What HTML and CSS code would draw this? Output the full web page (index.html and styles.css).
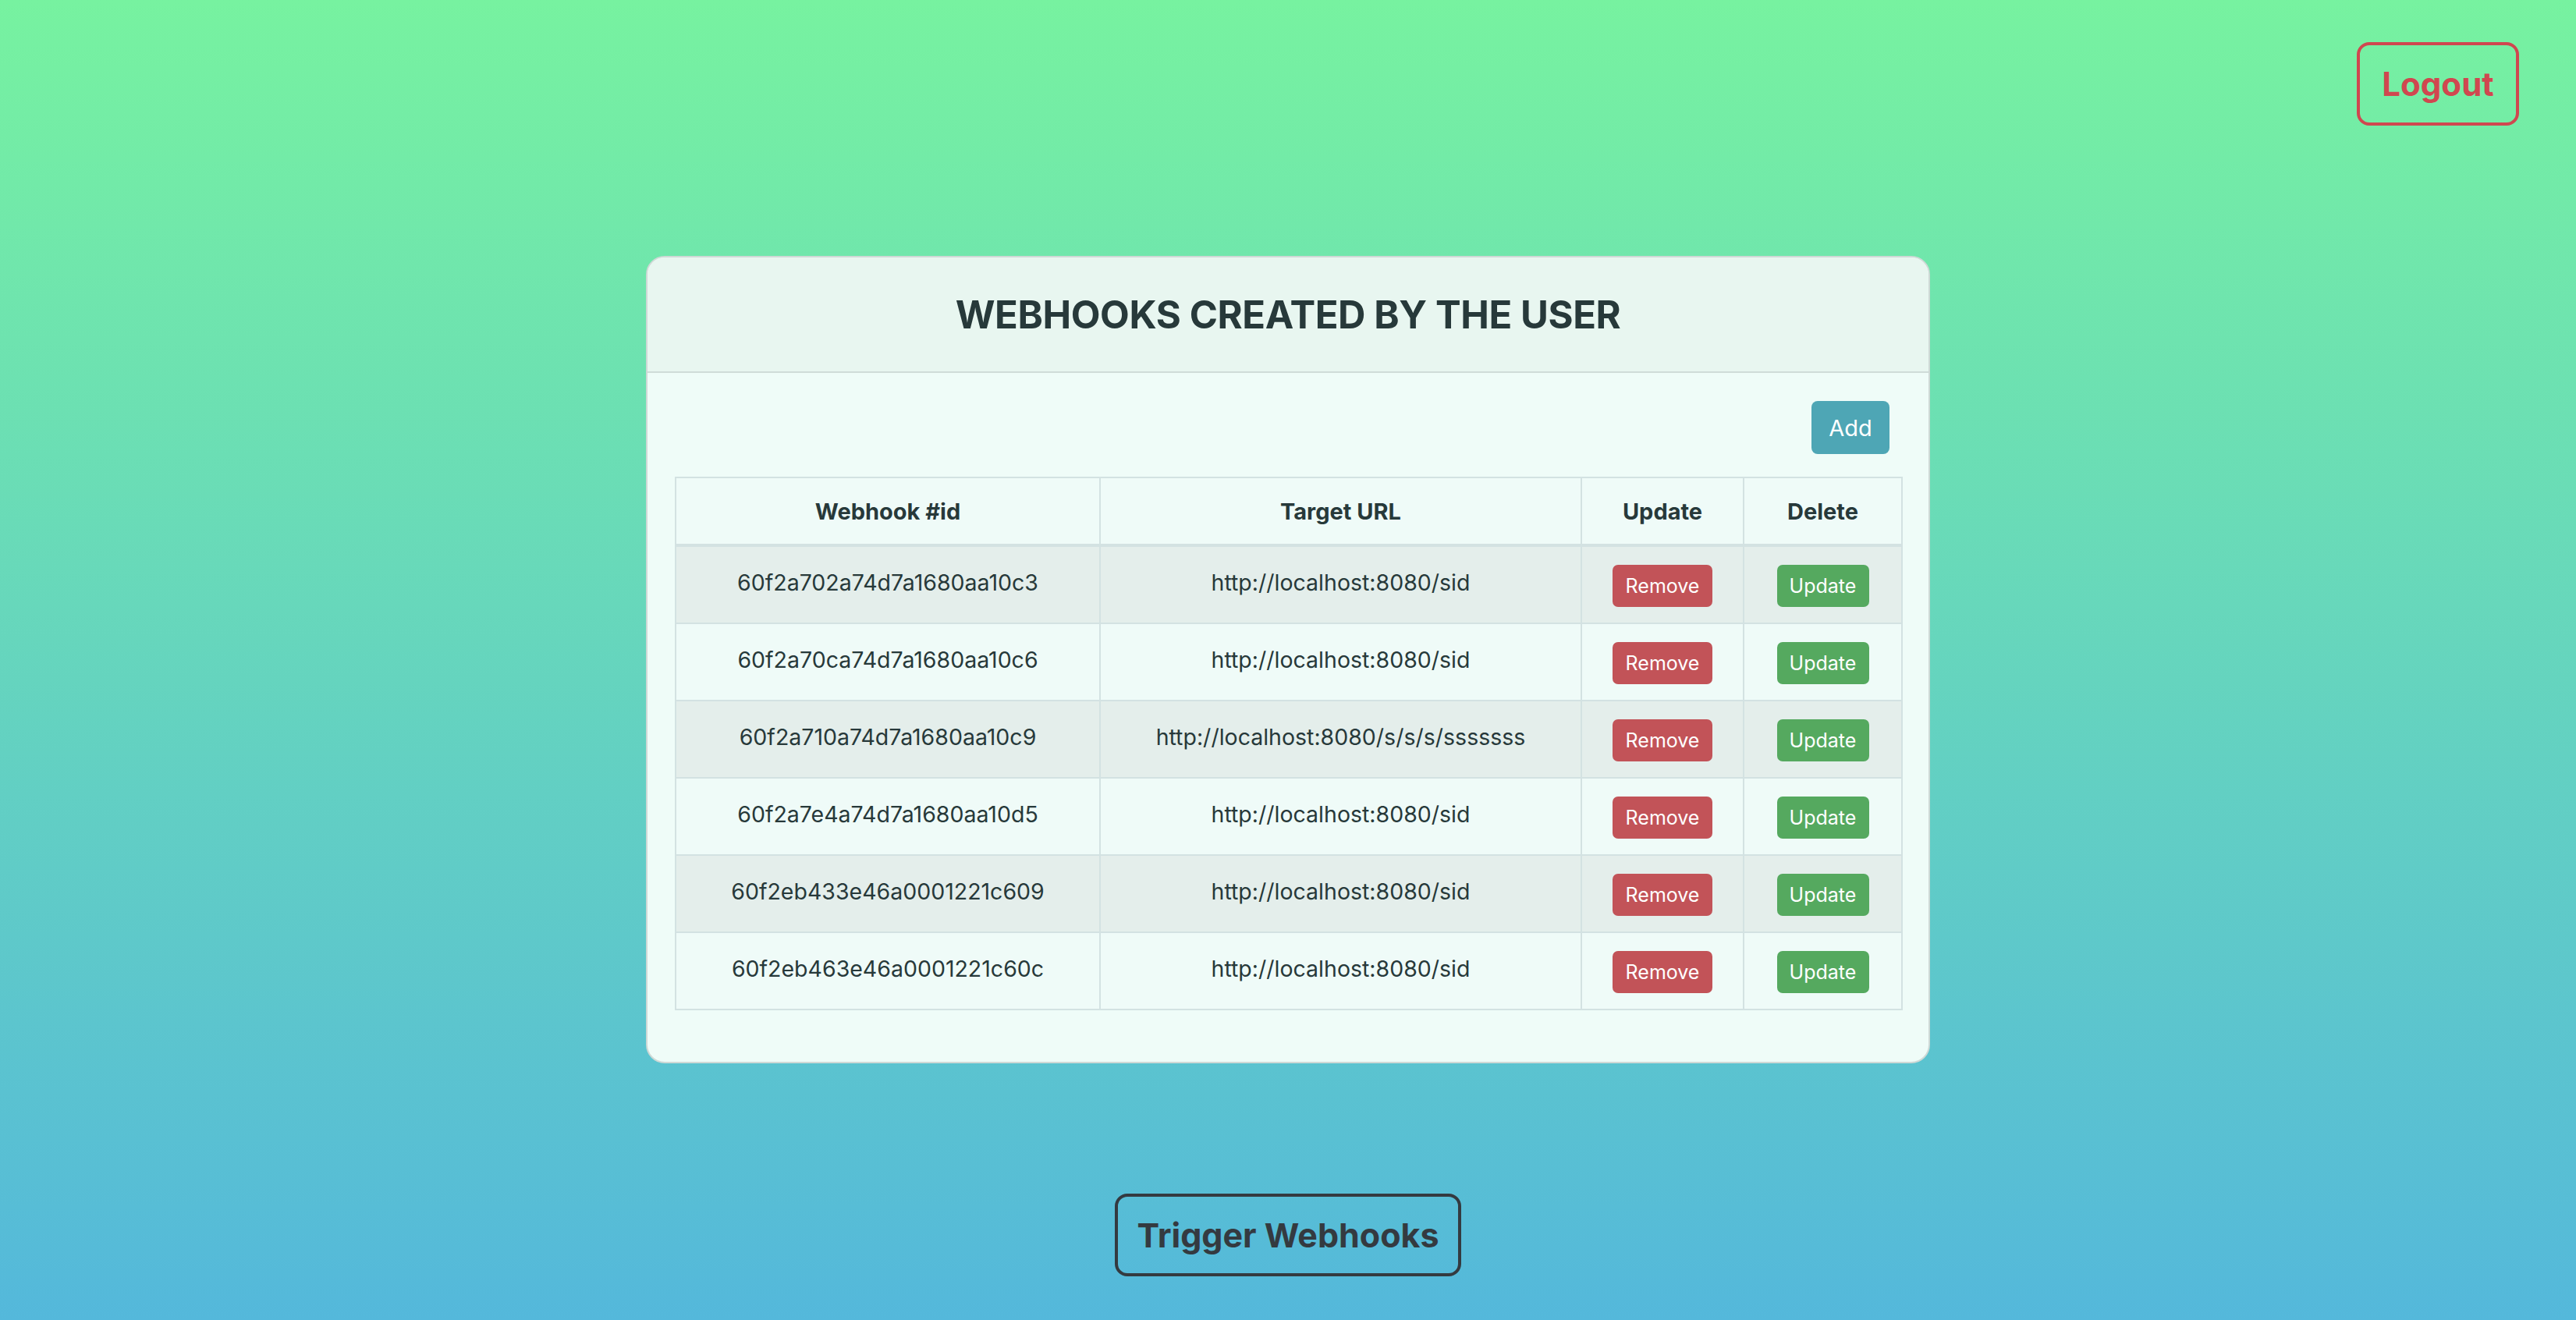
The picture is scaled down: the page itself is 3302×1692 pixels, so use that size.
FILE: index.html
```html
<!DOCTYPE html>
<html lang="en">
<head>
<meta charset="utf-8">
<title>Webhooks</title>
<link rel="stylesheet" href="styles.css">
</head>
<body>
<div class="topbar">
  <button class="btn-logout">Logout</button>
</div>
<main class="card">
  <header class="card-header">
    <h1 class="card-title">WEBHOOKS CREATED BY THE USER</h1>
  </header>
  <section class="card-body">
    <div class="actions">
      <button class="btn btn-add">Add</button>
    </div>
    <table class="hooks">
      <colgroup>
        <col class="c-id"><col class="c-url"><col class="c-upd"><col class="c-del">
      </colgroup>
      <thead>
        <tr><th>Webhook #id</th><th>Target URL</th><th>Update</th><th>Delete</th></tr>
      </thead>
      <tbody>
        <tr><td>60f2a702a74d7a1680aa10c3</td><td>http://localhost:8080/sid</td><td><button class="btn btn-sm btn-red">Remove</button></td><td><button class="btn btn-sm btn-green">Update</button></td></tr>
        <tr><td>60f2a70ca74d7a1680aa10c6</td><td>http://localhost:8080/sid</td><td><button class="btn btn-sm btn-red">Remove</button></td><td><button class="btn btn-sm btn-green">Update</button></td></tr>
        <tr><td>60f2a710a74d7a1680aa10c9</td><td>http://localhost:8080/s/s/s/sssssss</td><td><button class="btn btn-sm btn-red">Remove</button></td><td><button class="btn btn-sm btn-green">Update</button></td></tr>
        <tr><td>60f2a7e4a74d7a1680aa10d5</td><td>http://localhost:8080/sid</td><td><button class="btn btn-sm btn-red">Remove</button></td><td><button class="btn btn-sm btn-green">Update</button></td></tr>
        <tr><td>60f2eb433e46a0001221c609</td><td>http://localhost:8080/sid</td><td><button class="btn btn-sm btn-red">Remove</button></td><td><button class="btn btn-sm btn-green">Update</button></td></tr>
        <tr><td>60f2eb463e46a0001221c60c</td><td>http://localhost:8080/sid</td><td><button class="btn btn-sm btn-red">Remove</button></td><td><button class="btn btn-sm btn-green">Update</button></td></tr>
      </tbody>
    </table>
  </section>
</main>
<div class="bottombar">
  <button class="btn-trigger">Trigger Webhooks</button>
</div>
</body>
</html>
```

FILE: styles.css
```css
* { box-sizing: border-box; }
html, body { height: 100%; }
body {
  margin: 0;
  min-height: 100vh;
  background: linear-gradient(180deg, #77f2a0 0%, #54b8db 100%);
  font-family: Inter, "Noto Sans", "Liberation Sans", sans-serif;
  color: #27393a;
  display: flex;
  flex-direction: column;
  align-items: center;
}
button { font-family: inherit; cursor: pointer; }

.topbar {
  align-self: stretch;
  display: flex;
  justify-content: flex-end;
  padding: 54px 73px 0 0;
}
.btn-logout {
  width: 208px;
  height: 107px;
  border: 4px solid #d0474f;
  border-radius: 16px;
  background: transparent;
  color: #d0474f;
  font-size: 42px;
  font-weight: 700;
  padding: 0;
}

.card {
  margin-top: 167px;
  width: 1646px;
  border: 2px solid #cfd9d6;
  border-radius: 24px;
  background: #effcf8;
  overflow: hidden;
}
.card-header {
  height: 148px;
  background: #e8f6f0;
  border-bottom: 2px solid #cfdcd8;
  display: flex;
  align-items: center;
  justify-content: center;
}
.card-title {
  margin: 0;
  font-size: 49px;
  font-weight: 700;
  letter-spacing: -0.4px;
  color: #27393a;
}
.card-body {
  padding: 36px 35px 66px;
}
.actions {
  display: flex;
  justify-content: flex-end;
  padding-right: 15px;
  margin-bottom: 29px;
}
.btn {
  border: none;
  color: #ffffff;
  padding: 0;
}
.btn-add {
  width: 100px;
  height: 68px;
  border-radius: 8px;
  background: #4ea6b5;
  font-size: 29px;
}

.hooks {
  width: 1572px;
  table-layout: fixed;
  border-collapse: collapse;
  text-align: center;
}
.c-id { width: 544px; }
.c-url { width: 617px; }
.c-upd { width: 208px; }
.c-del { width: 203px; }
.hooks th, .hooks td {
  border: 2px solid #d3e2e2;
}
.hooks th {
  height: 87px;
  font-size: 29px;
  font-weight: 700;
  border-bottom: 4px solid #d3e2e2;
  padding: 0 10px;
  vertical-align: middle;
  background: #effbf8;
}
.hooks td {
  padding: 23px 10px 20px;
  font-size: 28.5px;
  line-height: 45px;
  vertical-align: top;
  background: #effbf8;
}
.hooks tbody tr:nth-child(odd) td { background: #e4eeeb; }
.btn-sm {
  display: block;
  margin: 0 auto;
  height: 54px;
  border-radius: 7px;
  font-size: 25px;
}
.btn-red { width: 128px; background: #c25358; }
.btn-green { width: 118px; background: #55a95f; }

.bottombar {
  margin-top: 167px;
}
.btn-trigger {
  width: 444px;
  height: 106px;
  border: 4px solid #343a40;
  border-radius: 16px;
  background: transparent;
  color: #343a40;
  font-size: 43px;
  font-weight: 700;
  padding: 0;
}
```
